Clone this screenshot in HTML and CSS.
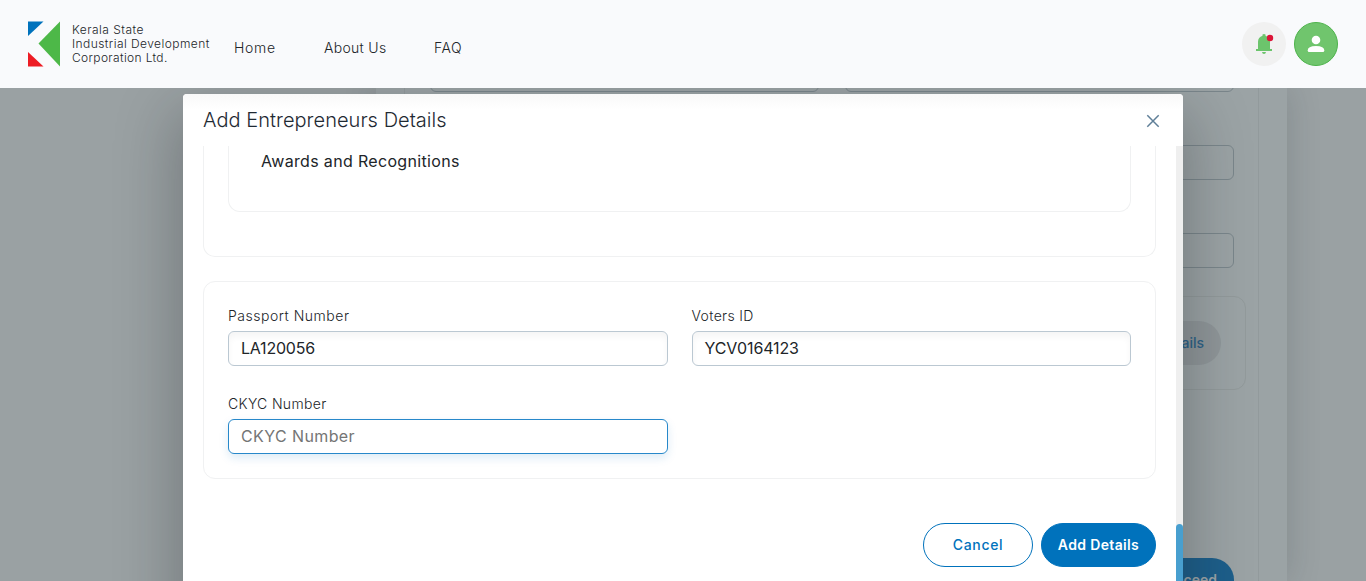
FILE: index.html
```html
<!DOCTYPE html>
<html lang="en">
<head>
<meta charset="utf-8">
<title>Kerala State Industrial Development Corporation Ltd.</title>
<link rel="stylesheet" href="styles.css">
</head>
<body>
<header class="topbar">
  <div class="brand">
    <svg class="brand-mark" width="33" height="46" viewBox="0 0 33 46"><path fill="#0072bc" d="M0 .5h15.500L0 15z"/><path fill="#ed1c24" d="M0 31v14.500h15.500z"/><path fill="#4db848" d="M32 .5v45L10.500 22.500z"/></svg>
    <div class="brand-name"><span class="b1">Kerala State</span><span class="b2">Industrial Development</span><span class="b3">Corporation Ltd.</span></div>
  </div>
  <nav class="nav"><a class="n1">Home</a><a class="n2">About Us</a><a class="n3">FAQ</a></nav>
  <div class="actions">
    <div class="round bell">
      <svg width="44" height="44" viewBox="0 0 44 44"><path fill="#6cc46c" d="M20.500 12.500q1.500-1.200 3 0v1.300q4.500 1.500 4.500 6.200v7h2v2H14v-2h2v-7q0-4.700 4.500-6.200zM20 30h4q-.3 2-2 2t-2-2z"/><circle cx="28" cy="16" r="3.200" fill="#dc1438"/></svg>
    </div>
    <div class="round user">
      <svg width="42" height="42" viewBox="0 0 42 42"><circle cx="21" cy="17" r="4.300" fill="#fff"/><path fill="#fff" d="M12.700 27.500q0-4.500 8.300-4.500t8.300 4.500q0 1.500-1.500 1.500H14.200q-1.500 0-1.500-1.500z"/></svg>
    </div>
  </div>
</header>
<main class="page">
  <div class="sheet">
    <div class="sheet-inner">
      <div class="row cut"><div class="ghost"></div><div class="ghost"></div></div>
      <div class="row"><div class="ghost"></div><div class="ghost"></div></div>
      <div class="row"><div class="ghost"></div><div class="ghost"></div></div>
      <div class="ghost-card"><div class="ghost-pill">Add Details</div></div>
      <div class="proceed">Proceed</div>
    </div>
  </div>
</main>
<div class="shade">
  <section class="modal">
    <div class="modal-head"><h2>Add Entrepreneurs Details</h2>
      <svg class="close" width="14" height="14" viewBox="0 0 14 14"><path d="M1.300 1.300l11.400 11.400M12.700 1.300L1.300 12.700" stroke="#5f7f98" stroke-width="1.500"/></svg>
    </div>
    <div class="modal-main">
      <div class="modal-body">
        <div class="card card-top"><div class="subcard"><h3>Awards and Recognitions</h3></div></div>
        <div class="card fields">
          <div class="field"><label class="l1">Passport Number</label><div class="input i1">LA120056</div></div>
          <div class="field"><label class="l2">Voters ID</label><div class="input i2">YCV0164123</div></div>
          <div class="field"><label class="l3">CKYC Number</label><div class="input focus i3">CKYC Number</div></div>
        </div>
        <div class="buttons"><button class="btn cancel">Cancel</button><button class="btn primary">Add Details</button></div>
      </div>
      <div class="track"><div class="thumb"></div></div>
    </div>
  </section>
</div>
</body>
</html>
```
FILE: styles.css
```css
* { box-sizing: border-box; }
body { margin: 0; height: 581px; overflow: hidden; background: #9aa1a3; font-family: Inter, "Open Sans", sans-serif; color: #212529; }
.topbar { position: relative; z-index: 3; height: 88px; background: #f9fafc; display: flex; align-items: center; padding: 0 28px; }
.brand { display: flex; align-items: center; gap: 11px; width: 206px; }
.brand-mark { flex: none; }
.brand-name { display: flex; flex-direction: column; font-size: 12px; line-height: 14px; white-space: nowrap; font-weight: 300; }
.b1 { letter-spacing: .48px; }
.b2 { letter-spacing: .43px; }
.b3 { letter-spacing: .35px; }
.nav { display: flex; font-size: 14px; font-weight: 300; line-height: 20px; padding-top: 8px; white-space: nowrap; }
.n1 { width: 90px; letter-spacing: .7px; }
.n2 { width: 110px; letter-spacing: .3px; }
.n3 { letter-spacing: .5px; }
.actions { margin-left: auto; display: flex; gap: 8px; }
.round { width: 44px; height: 44px; border-radius: 50%; }
.bell { background: #f1f1f1; }
.user { background: #70c56d; border: 1px solid #4db34b; }
.page { height: 493px; overflow: hidden; padding: 0 79px 0 376px; }
.sheet { height: 493px; padding: 0 28px; background: #9ba3a5; box-shadow: 0 0 32px rgba(30,40,45,.18); }
.sheet-inner { display: flow-root; height: 493px; border: solid #929a9c; border-width: 0 1px; padding: 0 12px 0 25px; }
.row { display: flex; gap: 26px; margin: 53px 12px 0 0; }
.row.cut { margin-top: -31px; }
.ghost { flex: 1; height: 35px; border: 1px solid #7a868b; border-radius: 6px; }
.ghost-card { height: 94px; border: 1px solid #929a9b; border-radius: 12px; margin-top: 28px; padding: 24px; display: flex; justify-content: flex-end; }
.ghost-pill { width: 120px; height: 44px; border-radius: 22px; background: #90979a; color: #2d6287; font: 500 14px/44px Inter, sans-serif; text-align: right; padding-right: 17px; }
.proceed { margin: 168px 12px 0 auto; width: 110px; height: 44px; border-radius: 22px; background: #1d5f8b; color: #9ba3a7; font: 600 14px/44px Inter, sans-serif; text-align: right; padding-right: 17px; }
.shade { position: absolute; z-index: 2; inset: 88px 0 0 0; overflow: hidden; padding: 6px 183px 0; }
.modal { height: 560px; width: 1000px; background: #fff; border-radius: 4px; box-shadow: 0 24px 60px 8px rgba(20,25,28,.28); }
.modal-head { height: 52px; padding: 0 23px 0 20px; display: flex; align-items: center; justify-content: space-between; border-radius: 4px 4px 0 0; background: linear-gradient(#f8f8f8, #fff 15px); }
h2 { margin: 0; font-size: 20px; font-weight: 300; line-height: 28px; white-space: nowrap; letter-spacing: .04px; color: #1f2a33; }
.close { margin-top: 2px; }
.modal-main { display: flex; height: 435px; }
.modal-body { flex: 1; padding: 0 20px; }
.card { border: 1px solid #f0f1f2; border-radius: 12px; padding: 24px; }
.card-top { height: 111px; border-top: 0; border-radius: 0 0 12px 12px; padding-top: 0; }
.subcard { height: 66px; border: 1px solid #f0f1f2; border-top: 0; border-radius: 0 0 12px 12px; padding: 3px 32px; }
h3 { margin: 0; font-size: 16px; font-weight: 400; line-height: 24px; white-space: nowrap; letter-spacing: .33px; }
.fields { height: 198px; margin-top: 24px; display: grid; grid-template-columns: 1fr 1fr; column-gap: 24px; row-gap: 28px; align-content: start; }
.field { height: 60px; min-width: 0; }
label { display: block; height: 25px; line-height: 19px; font-size: 14px; font-weight: 300; white-space: nowrap; }
.l1 { letter-spacing: .52px; }
.l2 { letter-spacing: .35px; }
.l3 { letter-spacing: .33px; }
.input { height: 35px; border: 1px solid #bbc8d2; border-radius: 6px; padding: 0 12px; font-size: 16px; line-height: 33px; box-shadow: inset 0 5px 6px rgba(0,0,0,.04); }
.i1 { letter-spacing: -.22px; }
.i2 { letter-spacing: -.12px; }
.i3 { letter-spacing: .4px; }
.input.focus { border-color: #2788ca; color: #757575; box-shadow: 0 4px 10px rgba(0,115,190,.14); }
.buttons { margin-top: 44px; display: flex; justify-content: flex-end; gap: 8px; }
.btn { height: 44px; border: 1px solid #0072bc; border-radius: 22px; padding: 0; font: 500 14px/42px Inter, sans-serif; white-space: nowrap; }
.cancel { width: 110px; background: #fff; color: #0072bc; letter-spacing: .65px; }
.primary { width: 115px; background: #0072bc; color: #fff; font-weight: 600; letter-spacing: .35px; }
.track { width: 7px; background: #efefef; padding-top: 378px; }
.thumb { height: 70px; border-radius: 4px 4px 0 0; background: #489fcf; }
```
